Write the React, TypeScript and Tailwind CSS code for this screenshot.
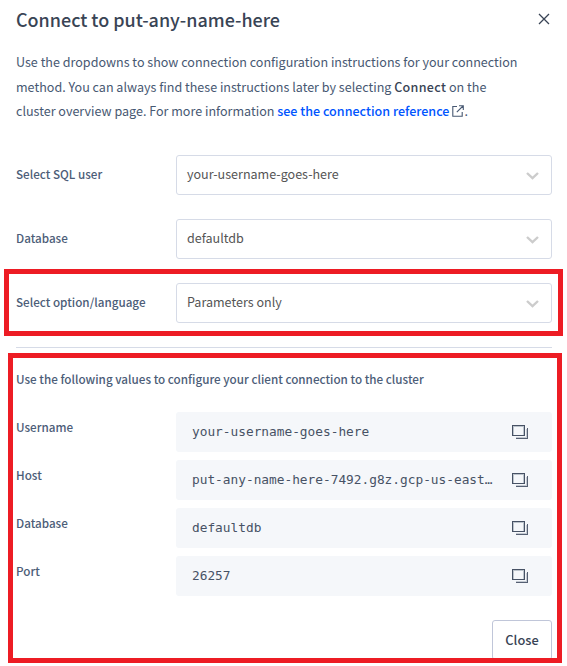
import React from "react";

const SANS = "font-['Noto_Sans_CJK_SC','Noto_Sans',sans-serif]";

function Chevron() {
  return (
    <svg className="mt-0.5" width="13" height="8" viewBox="0 0 13 8" fill="none" stroke="#cccccc" strokeWidth="2.4">
      <path d="M1 1 6.5 6.2 12 1" />
    </svg>
  );
}

function CopyIcon() {
  return (
    <svg className="shrink-0" width="18" height="16" viewBox="0 0 18 16" fill="none" shapeRendering="crispEdges">
      <path d="M2.5 2.5h10v9h-10z" stroke="#bcc4cc" />
      <path d="M1.5 1.5h12v10h-12z" stroke="#475265" />
      <path d="M5 13.5h10.5V5" stroke="#c4cad2" />
      <path d="M4.5 14.5h12V4" stroke="#566073" />
    </svg>
  );
}

function SelectRow({ label, value }: { label: string; value: string }) {
  return (
    <div className="flex h-10 items-center">
      <div className="w-40 pb-0.5 text-[11.68px] font-medium text-[#4c5d78]">{label}</div>
      <div className="flex h-10 flex-1 items-center justify-between rounded-[3px] border border-[#d6dbe7] pl-2.5 pr-3 text-[12.55px] text-[#555555]">
        <span>{value}</span>
        <Chevron />
      </div>
    </div>
  );
}

function ValueRow({ label, value }: { label: string; value: string }) {
  return (
    <div className="flex h-10">
      <div className="w-40 pt-[5px] text-[11.68px] leading-[20px] font-medium text-[#4c5d78]">{label}</div>
      <div className="flex w-[376px] items-center justify-between rounded-[3px] bg-[#f5f7fa] pl-4 pr-[23px]">
        <span className="whitespace-nowrap font-['DejaVu_Sans_Mono',monospace] text-[12.8px] text-[#475265]">
          {value}
        </span>
        <CopyIcon />
      </div>
    </div>
  );
}

export default function App() {
  return (
    <div className={`relative h-[666px] w-[567px] overflow-hidden bg-white ${SANS}`}>
      <div className="flex flex-col pl-4 pr-[15px]">
        <div className="flex h-[38px] items-center justify-between pr-[2px]">
          <h1 className="text-[17.95px] leading-6 font-medium text-[#394455]">Connect to put-any-name-here</h1>
          <svg width="12" height="12" viewBox="0 0 12 12" fill="none" stroke="#394455" strokeWidth="1.3">
            <path d="M1 1 11 11M11 1 1 11" />
          </svg>
        </div>
        <div className="mt-3 text-[12.55px] leading-[24.5px] whitespace-nowrap text-[#475872]">
          <div>Use the dropdowns to show connection configuration instructions for your connection</div>
          <div>
            method. You can always find these instructions later by selecting{" "}
            <span className="font-medium tracking-[0.3px] text-[#394455]">Connect</span> on the
          </div>
          <div>
            cluster overview page. For more information{" "}
            <span className="font-medium text-[#0055ff]">see the connection reference</span>
            <svg className="ml-[3px] inline-block align-[-1px]" width="12" height="12" viewBox="0 0 12 12" fill="none" stroke="#475872" strokeWidth="1.1">
              <path d="M5 1.5H.8v9.7h9.4V7M7 .7h4.3V5M11 1 4.8 7.2" />
            </svg>
            .
          </div>
        </div>
        <div className="mt-[31px] flex flex-col gap-6">
          <SelectRow label="Select SQL user" value="your-username-goes-here" />
          <SelectRow label="Database" value="defaultdb" />
          <SelectRow label="Select option/language" value="Parameters only" />
        </div>
        <div className="mt-6 h-px bg-[#d6dbe7]" />
        <div className="mt-[21px] text-[11.68px] leading-5 font-medium text-[#4c5d78]">
          Use the following values to configure your client connection to the cluster
        </div>
        <div className="mt-[23px] flex flex-col gap-2">
          <ValueRow label="Username" value="your-username-goes-here" />
          <ValueRow label="Host" value="put-any-name-here-7492.g8z.gcp-us-east…" />
          <ValueRow label="Database" value="defaultdb" />
          <ValueRow label="Port" value="26257" />
        </div>
        <button className="mt-6 h-10 w-[60px] self-end rounded-[3px] border border-[#c0c6d9] text-[12.8px] font-medium text-[#394455]">
          Close
        </button>
      </div>
      <div className="absolute top-[269px] left-1 h-[67px] w-[559px] border-5 border-[#ed1c24]" />
      <div className="absolute top-[353px] left-2 h-[310px] w-[554px] border-5 border-[#ed1c24]" />
    </div>
  );
}
